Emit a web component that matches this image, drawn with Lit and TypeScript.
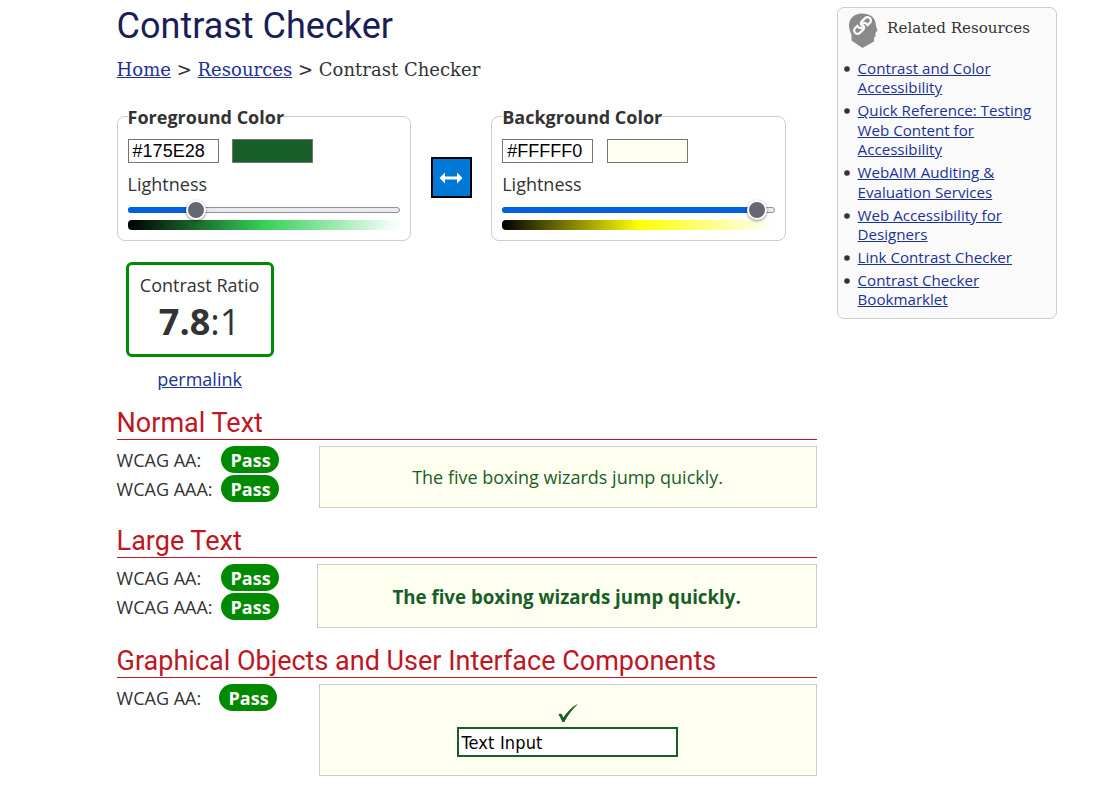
import { LitElement, html, css } from "lit";
import { customElement, property } from "lit/decorators.js";

@customElement("color-panel")
class ColorPanel extends LitElement {
  @property() label = "";
  @property() hex = "";
  @property() hue = "";
  @property({ type: Number }) pos = 0;

  static styles = css`
    :host { display: block; }
    .panel { box-sizing: border-box; height: 125px; border: 1px solid #ccc; border-radius: 8px; padding: 0 10px; }
    .legend { display: block; width: max-content; margin-top: -12px; height: 24px; line-height: 24px; background: #fff; font-weight: 700; font-size: 18px; }
    .row { display: flex; gap: 13.5px; margin-top: 10px; }
    .hex { box-sizing: border-box; width: 91px; height: 24px; border: 1px solid #767676; padding: 0 4px; font: 18px/22px "Liberation Sans", sans-serif; color: #000; background: #fff; }
    .swatch { box-sizing: border-box; width: 81px; height: 24px; border: 1px solid #767676; }
    .name { margin-top: 9px; height: 25px; line-height: 25px; }
    .slider { position: relative; box-sizing: border-box; height: 6px; margin-top: 10px; border: 1px solid #8f8f9d; border-radius: 3px; background: #e9e9ed; }
    .fill { position: absolute; left: -1px; top: -1px; height: 6px; border-radius: 3px; background: #0060df; }
    .thumb { position: absolute; top: -8px; width: 16px; height: 16px; margin-left: -11px; border: 2px solid #fff; border-radius: 50%; background: #676774; box-shadow: 0 1px 3px rgba(0, 0, 0, 0.45); }
    .ramp { height: 10px; margin-top: 7px; border-radius: 4px; }
  `;

  render() {
    return html`<div class="panel">
      <span class="legend">${this.label}</span>
      <div class="row">
        <div class="hex">${this.hex}</div>
        <div class="swatch" style="background:${this.hex}"></div>
      </div>
      <div class="name">Lightness</div>
      <div class="slider">
        <div class="fill" style="width:${this.pos}px"></div>
        <div class="thumb" style="left:${this.pos}px"></div>
      </div>
      <div class="ramp" style="background:linear-gradient(to right,#000,${this.hue},#fff)"></div>
    </div>`;
  }
}

@customElement("app-root")
class AppRoot extends LitElement {
  static styles = css`
    :host { display: block; height: 788px; overflow: hidden; background: #fff; color: #333; font: 18px/25px "Open Sans", sans-serif; }
    a { color: #1b3297; text-decoration: underline; }
    .page { display: flex; align-items: flex-start; padding-left: 116.6px; }
    .main { width: 700px; }
    h1 { margin: 5px 0 0; font: 400 36px/42px Roboto, sans-serif; color: #191e58; white-space: nowrap; }
    .crumbs { margin-top: 10px; height: 26px; font: 18px/26px "DejaVu Serif", serif; letter-spacing: 0.02px; white-space: nowrap; }
    .colors { display: flex; margin-top: 33px; }
    .fg { width: 294px; }
    .bg { width: 295px; }
    .swap { box-sizing: border-box; width: 41px; height: 41px; margin: 41px 19.6px 0 20px; border: 2px solid #000; background: #0078d7; display: flex; align-items: center; justify-content: center; }
    .result { width: 148px; margin: 21px 0 0 9px; text-align: center; }
    .ratio { box-sizing: border-box; height: 95px; border: 3px solid #008a00; border-radius: 6px; padding-top: 8px; }
    .value { font-size: 36px; line-height: 47px; }
    .link { margin-top: 10px; height: 25px; }
    h2 { margin: 0; box-sizing: border-box; height: 35px; border-bottom: 1px solid #be1622; font: 400 27px/36px Roboto, sans-serif; color: #be1622; white-space: nowrap; }
    .normal { margin-top: 13px; }
    .large { margin-top: 15px; }
    .objects { margin-top: 15px; }
    .body { display: flex; justify-content: space-between; padding-top: 6px; }
    .line { display: flex; height: 29px; line-height: 29px; }
    .level { width: 104px; }
    .objects .level { width: 102px; }
    .pass { box-sizing: border-box; width: 58px; height: 27px; padding-left: 2px; border-radius: 14px; background: #008a00; color: #fff; font-weight: 700; text-align: center; line-height: 29px; }
    .sample { box-sizing: border-box; border: 1px solid #ccc; background: #fffff0; color: #175e28; display: flex; align-items: center; justify-content: center; width: 498px; height: 62px; }
    .large .sample { width: 500px; height: 64px; font-size: 18.7px; font-weight: 700; }
    .objects .sample { height: 92px; flex-direction: column; justify-content: flex-start; padding-top: 19px; }
    .check { display: block; }
    .field { box-sizing: border-box; width: 221px; height: 30px; margin-top: 3px; border: 2px solid #175e28; background: #fff; color: #000; padding: 0 2.5px; font: 18px/27px "DejaVu Sans Condensed", "DejaVu Sans", sans-serif; font-stretch: condensed; letter-spacing: 0.15px; }
    .side { box-sizing: border-box; width: 220px; height: 312px; margin: 7px 0 0 20px; border: 1px solid #ccc; border-radius: 7px; background: #fafafa; }
    .head { display: flex; height: 50px; }
    .icon { margin: 4px 0 0 10px; width: 32px; height: 38px; }
    .title { margin-left: 7.5px; line-height: 40px; font-family: "DejaVu Serif", serif; font-size: 15.1px; white-space: nowrap; }
    ul { margin: 0; padding: 1px 0 0 20px; font-size: 15.14px; line-height: 19.4px; list-style: none; }
    li { position: relative; margin-bottom: 3.6px; }
    .dot { position: absolute; left: -13.500px; top: 7px; width: 6px; height: 6px; }
  `;

  private section(kind: string, title: string, levels: string[], sample: unknown) {
    return html`<section class=${kind}>
      <h2>${title}</h2>
      <div class="body">
        <div>${levels.map((l) => html`<div class="line"><span class="level">WCAG ${l}:</span><span class="pass">Pass</span></div>`)}</div>
        <div class="sample">${sample}</div>
      </div>
    </section>`;
  }

  render() {
    const phrase = "The five boxing wizards jump quickly.";
    const links = [
      ["Contrast and Color", "Accessibility"],
      ["Quick Reference: Testing", "Web Content for", "Accessibility"],
      ["WebAIM Auditing &", "Evaluation Services"],
      ["Web Accessibility for", "Designers"],
      ["Link Contrast Checker"],
      ["Contrast Checker", "Bookmarklet"],
    ];
    return html`<div class="page">
      <main class="main">
        <h1>Contrast Checker</h1>
        <div class="crumbs"><a>Home</a> &gt; <a>Resources</a> &gt; Contrast Checker</div>
        <div class="colors">
          <color-panel class="fg" label="Foreground Color" hex="#175E28" hue="#34d058" pos="68"></color-panel>
          <div class="swap">
            <svg width="24" height="12" viewBox="0 0 24 12"><path d="M0.5 6 6 .5V4.5H18V.5L23.5 6 18 11.500V7.500H6V11.500Z" fill="#fff"/></svg>
          </div>
          <color-panel class="bg" label="Background Color" hex="#FFFFF0" hue="#ff0" pos="255"></color-panel>
        </div>
        <div class="result">
          <div class="ratio">Contrast Ratio<div class="value"><b>7.8</b>:1</div></div>
          <div class="link"><a>permalink</a></div>
        </div>
        ${this.section("normal", "Normal Text", ["AA", "AAA"], phrase)}
        ${this.section("large", "Large Text", ["AA", "AAA"], phrase)}
        ${this.section("objects", "Graphical Objects and User Interface Components", ["AA"], html`
          <svg class="check" width="20" height="20" viewBox="0 0 20 20"><path d="M.3 10.800C1.800 9.200 3.600 9.400 4.200 11.100L5.200 13.600C9 8 13.500 3.300 19 .2L19.300.7C14 5.300 9.800 11.500 6.300 18H4.300C3.300 15.500 2.200 12.700.3 10.800Z" fill="#175e28"/></svg>
          <div class="field">Text Input</div>`)}
      </main>
      <aside class="side">
        <div class="head">
          <svg class="icon" viewBox="0 0 32 38">
            <path d="M14 1.500C6 1.500 1 6.500 1 13.500C1 18 2.800 20.500 3.500 23V28.500L14.500 36L26 29.500V25.500L27.500 24.500V20.500L29.500 18.500L28 14C28 5.500 22 1.500 14 1.500Z" fill="#8a8a8a"/>
            <g transform="translate(14.500 13.500) rotate(-43)" fill="none" stroke="#fafafa" stroke-width="2.200" stroke-linecap="round">
              <path d="M-1.200 1.500A3.500 3.500 0 0 1-4-3.200H-7A3.400 3.400 0 0 0-7 3.600H-3A3.500 3.500 0 0 0 .6.4" />
              <path d="M1.200-1.500A3.500 3.500 0 0 1 4 3.200H7A3.400 3.400 0 0 0 7-3.600H3A3.500 3.500 0 0 0-.6-.4" />
            </g>
          </svg>
          <span class="title">Related Resources</span>
        </div>
        <ul>${links.map((l) => html`<li><svg class="dot" viewBox="0 0 6 6"><circle cx="3" cy="3" r="2.800" fill="#333"/></svg><a>${l.map((t, i) => (i ? html`<br>${t}` : t))}</a></li>`)}</ul>
      </aside>
    </div>`;
  }
}
